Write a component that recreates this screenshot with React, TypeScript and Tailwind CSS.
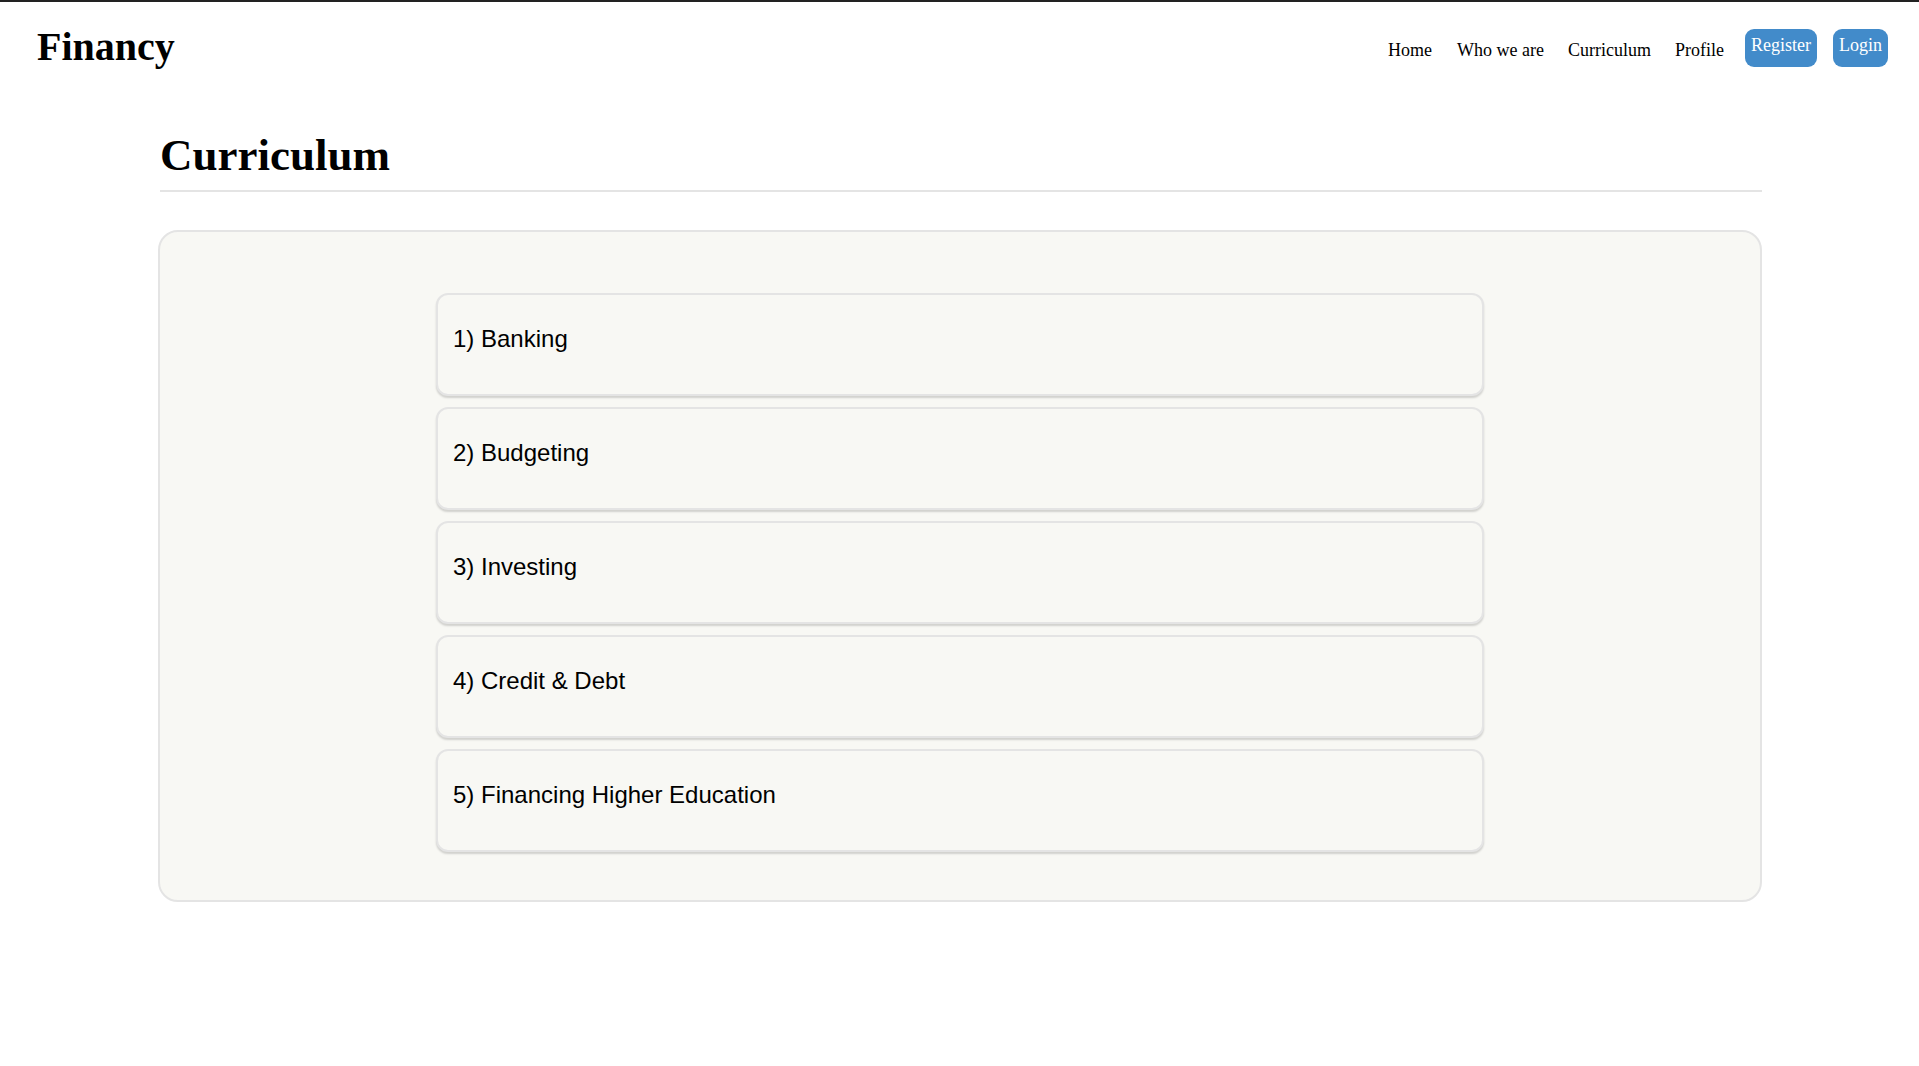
import React from 'react';

const topics = [
  '1) Banking',
  '2) Budgeting',
  '3) Investing',
  '4) Credit & Debt',
  '5) Financing Higher Education',
];

const serif = { fontFamily: '"Liberation Serif", "Times New Roman", serif' };

const TopicCard = ({ label }: { label: string }) => (
  <div className="w-[1048px] h-[103px] mx-auto bg-[#f8f8f4] border-2 border-[#e4e4e4] rounded-[12px] shadow-[0_2px_2px_rgba(0,0,0,0.16)] pl-[15px] pt-[30px]">
    <p
      className="text-[24px] leading-[28px] text-black"
      style={{ fontFamily: '"Liberation Sans", Arial, sans-serif' }}
    >
      {label}
    </p>
  </div>
);

export default function App() {
  return (
    <div className="min-h-screen bg-white" style={serif}>
      <div className="h-[2px] bg-[#222222]" />
      <header className="flex justify-between items-center h-[96px] pl-[37px] pr-[31px]">
        <h1 className="self-start mt-[22px] text-[40px] leading-[46px] font-bold text-black">Financy</h1>
        <nav className="flex items-center text-[18px] text-black">
          <a className="mr-[25px]">Home</a>
          <a className="mr-[24px]">Who we are</a>
          <a className="mr-[24px]">Curriculum</a>
          <a className="mr-[21px]">Profile</a>
          <button className="h-[38px] px-[6px] mr-[16px] flex items-center bg-[#428bca] text-white rounded-[9px] pb-[4px] -mt-[5px]">
            Register
          </button>
          <button className="h-[38px] px-[6px] flex items-center bg-[#428bca] text-white rounded-[9px] pb-[4px] -mt-[5px]">
            Login
          </button>
        </nav>
      </header>

      <main className="w-[1604px] ml-[158px]">
        <h2 className="mt-[32px] pl-[2px] text-[45px] leading-[50px] font-bold text-black">Curriculum</h2>
        <div className="mt-[10px] ml-[2px] h-[2px] bg-[#e4e4e4]" />
        <section className="mt-[38px] bg-[#f8f8f4] border-2 border-[#e4e4e4] rounded-[20px] pt-[61px] pb-[48px] flex flex-col gap-[11px]">
          {topics.map((t) => (
            <TopicCard key={t} label={t} />
          ))}
        </section>
      </main>
    </div>
  );
}
